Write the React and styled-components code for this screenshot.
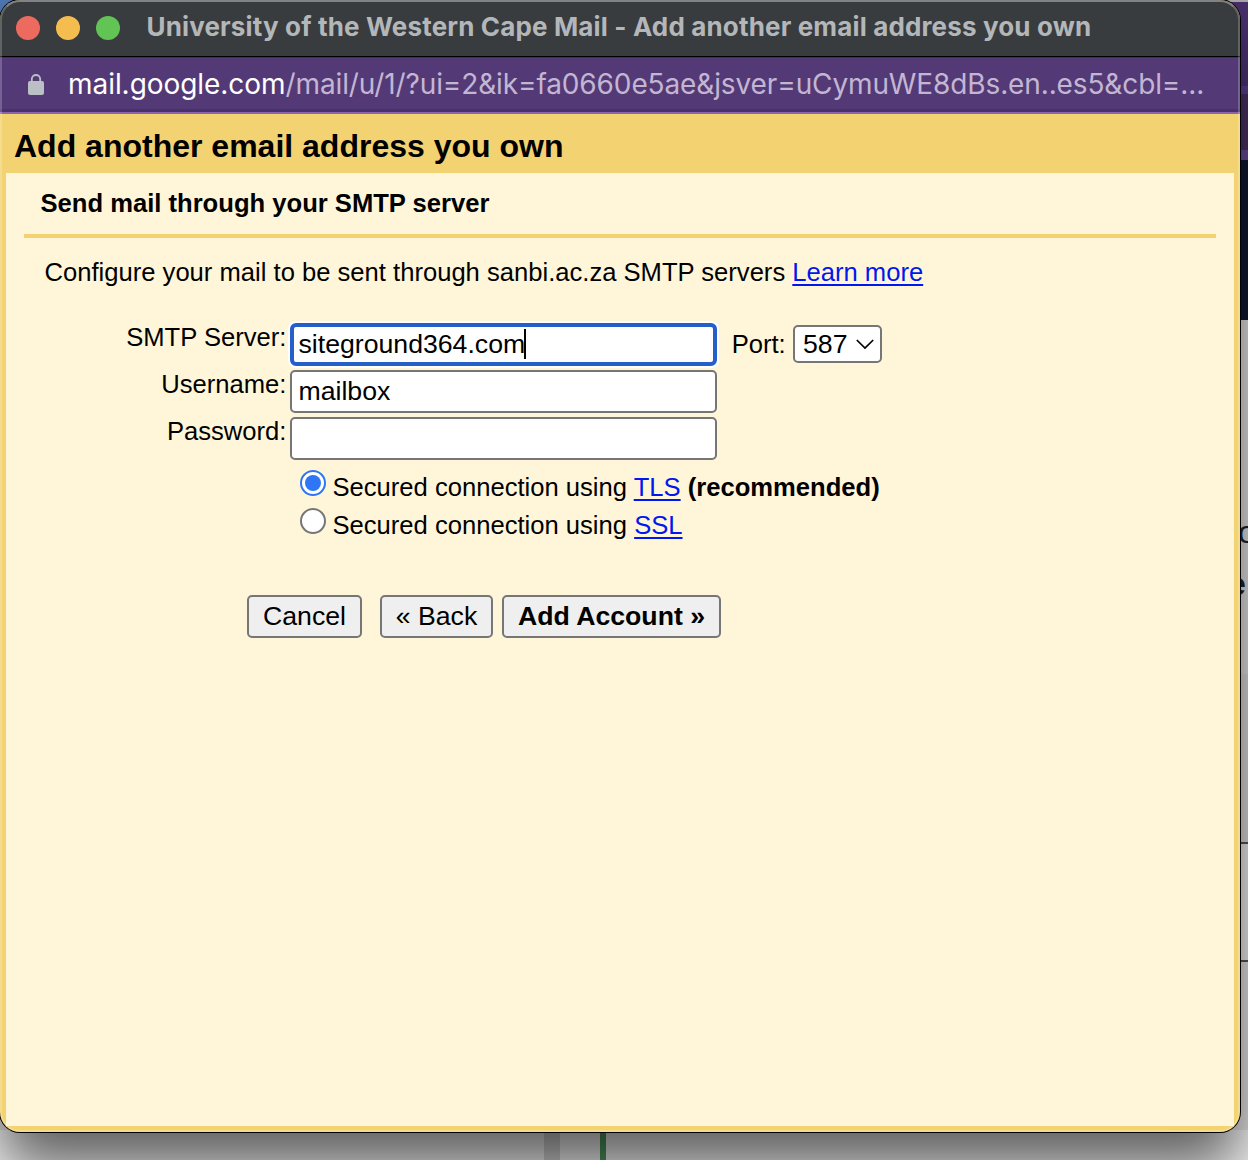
import React from "react";
import styled, { createGlobalStyle, css } from "styled-components";

const GlobalStyle = createGlobalStyle`
  * { box-sizing: border-box; }
  body {
    margin: 0;
    overflow: hidden;
    font-family: "Liberation Sans", Arial, sans-serif;
    color: #000;
  }
`;

const Desktop = styled.div`
  position: relative;
  width: 1248px;
  height: 1160px;
  overflow: hidden;
  background: #fff;
`;

const Backdrop = styled.div`
  position: absolute;
  inset: 0;
  display: flex;
  flex-direction: column;
  align-items: flex-end;
  background: linear-gradient(to bottom, #4f78b4 0, #4f78b4 60px, #e4e4e4 60px);
`;

const Strip = styled.div`
  flex: none;
  width: ${(p) => p.$w || 24}px;
  height: ${(p) => p.$h}px;
  background: ${(p) => p.$bg};
  padding: ${(p) => p.$pad || 0};
  font-size: 32px;
  line-height: 50px;
  color: #222;
`;

const Footer = styled.div`
  display: flex;
  width: 100%;
  flex: 1;
`;

const Block = styled.div`
  width: ${(p) => p.$w}px;
  background: ${(p) => p.$bg};
`;

const Window = styled.main`
  position: relative;
  display: flex;
  flex-direction: column;
  width: 1240px;
  height: 1132px;
  border-radius: 20px;
  overflow: hidden;
  background: #f3d272;
  box-shadow: 0 0 0 1px #000, 0 36px 60px rgba(0, 0, 0, 0.62);
  &::after {
    content: "";
    position: absolute;
    inset: 0;
    border: 2px solid rgba(255, 255, 255, 0.2);
    border-top-color: rgba(255, 255, 255, 0.36);
    border-radius: 20px;
    pointer-events: none;
  }
`;

const TitleBar = styled.header`
  display: flex;
  align-items: center;
  flex: none;
  height: 57px;
  padding: 0 0 1px 16px;
  background: #393c3e;
  border-bottom: 1px solid #000;
`;

const Light = styled.span`
  width: 24px;
  height: 24px;
  margin-right: 16px;
  border-radius: 50%;
  background: ${(p) => p.$color};
`;

const WindowTitle = styled.h1`
  margin: 0 0 2px 10.5px;
  font: 700 26px/32px Inter, sans-serif;
  letter-spacing: 0.15px;
  white-space: nowrap;
  color: #b4b7b9;
`;

const AddressBar = styled.div`
  display: flex;
  align-items: center;
  flex: none;
  height: 57px;
  padding: 0 0 0 28px;
  background: #533a77;
  border-bottom: 2px solid #8965b0;
  box-shadow: inset 0 1px #432f5b, inset 0 -3px #49326b;
`;

const Url = styled.div`
  margin: 0 0 1px 24px;
  font: 400 28px/34px Inter, sans-serif;
  letter-spacing: -0.12px;
  white-space: nowrap;
  color: #c3b6d3;
`;

const Host = styled.span`
  color: #fff;
  letter-spacing: -0.05px;
`;

const PageTitle = styled.h2`
  flex: none;
  height: 59px;
  margin: 0;
  padding: 14px 0 0 14px;
  font-size: 32px;
  line-height: 36px;
  white-space: nowrap;
`;

const Panel = styled.section`
  flex: 1;
  margin: 0 6px 6px;
  padding: 0 18px;
  background: #fff6da;
  font-size: 25.6px;
  line-height: 30px;
`;

const SectionTitle = styled.h3`
  height: 65px;
  margin: 0;
  padding: 15px 0 0 16.5px;
  font-size: 25.6px;
  line-height: 30px;
  border-bottom: 4px solid #f3d272;
`;

const Intro = styled.p`
  margin: 19px 0 0 20.5px;
  height: 65px;
`;

const Link = styled.a`
  color: #0018ee;
  text-decoration: underline;
  text-decoration-thickness: 2px;
  text-underline-offset: 3px;
`;

const FieldRow = styled.div`
  display: flex;
  height: 47px;
`;

const Label = styled.label`
  width: 262.4px;
  text-align: right;
  margin-right: 3.6px;
`;

const Field = styled.div`
  display: flex;
  align-items: center;
  width: 427px;
  height: 43px;
  margin-top: 1px;
  padding: 0 0 1px 6.5px;
  border: 2px solid #767676;
  border-radius: 5px;
  background: #fff;
  font-size: 26.67px;
  ${(p) =>
    p.$focused &&
    css`
      border: 4px solid #2560c8;
      padding-left: 4.5px;
      border-radius: 6px;
      box-shadow: 0 0 0 2px #fff;
    `}
`;

const Caret = styled.span`
  width: 2px;
  height: 30px;
  margin-left: -1.5px;
  background: #000;
`;

const PortLabel = styled.label`
  margin: 7px 7.3px 0 14.7px;
`;

const Select = styled.div`
  display: flex;
  align-items: center;
  justify-content: space-between;
  width: 89px;
  height: 38px;
  margin-top: 3px;
  padding: 0 6px 0 8px;
  border: 2px solid #767676;
  border-radius: 5px;
  background: #fff;
  font-size: 26.67px;
`;

const Options = styled.div`
  padding: 7px 0 0 276px;
`;

const Option = styled.label`
  display: flex;
  height: 38px;
`;

const OptionText = styled.span`
  margin: 2px 0 0 6.5px;
`;

const Radio = styled.span`
  display: flex;
  align-items: center;
  justify-content: center;
  width: 26px;
  height: 26px;
  border: 2px solid ${(p) => (p.$on ? "#2f76f5" : "#767676")};
  border-radius: 50%;
  background: #fff;
  &::after {
    content: "";
    width: 16px;
    height: 16px;
    border-radius: 50%;
    background: ${(p) => (p.$on ? "#2f76f5" : "transparent")};
  }
`;

const Actions = styled.div`
  display: flex;
  padding: 49px 0 0 223px;
`;

const Button = styled.button`
  width: ${(p) => p.$w}px;
  height: 43px;
  margin: 0 ${(p) => p.$gap || 0}px 0 0;
  padding: 0 0 1px;
  border: 2px solid #767676;
  border-radius: 5px;
  background: #efefef;
  color: #000;
  font: ${(p) => (p.$primary ? 700 : 400)} 26.67px/30px "Liberation Sans", Arial, sans-serif;
  white-space: nowrap;
`;

export default function App() {
  return (
    <Desktop>
      <GlobalStyle />
      <Backdrop>
        <Strip $w={80} $h={2} $bg="#aaa" />
        <Strip $w={80} $h={84} $bg="linear-gradient(#482f6c, #4d3377)" />
        <Strip $h={8} $bg="#5d4090" />
        <Strip $h={56} $bg="#4a3164" />
        <Strip $h={10} $bg="#6b4a9d" />
        <Strip $h={160} $bg="#0f1830" />
        <Strip $h={187} $bg="#e4e4e4" />
        <Strip $h={50} $bg="#e4e4e4" $pad="0 0 0 14px">o</Strip>
        <Strip $h={117} $bg="#e4e4e4" $pad="2px 0 0 4px"><b>e</b></Strip>
        <Strip $h={168} $bg="#dcdcdc" />
        <Strip $h={2} $bg="#555" />
        <Strip $h={116} $bg="#f0f0f0" />
        <Strip $h={2} $bg="#555" />
        <Strip $h={168} $bg="#e6e6e6" />
        <Footer>
          <Block $w={544} $bg="#f6f6f6" />
          <Block $w={16} $bg="#d3d3d3" />
          <Block $w={40} $bg="#f6f6f6" />
          <Block $w={6} $bg="#4f9a60" />
          <Block $w={642} $bg="#f6f6f6" />
        </Footer>
      </Backdrop>
      <Window>
        <TitleBar>
          <Light $color="#ed6a5f" />
          <Light $color="#f5bd4f" />
          <Light $color="#61c455" />
          <WindowTitle>University of the Western Cape Mail - Add another email address you own</WindowTitle>
        </TitleBar>
        <AddressBar>
          <svg width="16" height="22" viewBox="0 0 16 22">
            <rect y="7" width="16" height="14" rx="2" fill="#bbc0c4" />
            <path d="M3.8 8V5.2a4.2 4.2 0 0 1 8.4 0V8" fill="none" stroke="#bbc0c4" strokeWidth="1.8" />
          </svg>
          <Url>
            <Host>mail.google.com</Host>/mail/u/1/?ui=2&amp;ik=fa0660e5ae&amp;jsver=uCymuWE8dBs.en..es5&amp;cbl=...
          </Url>
        </AddressBar>
        <PageTitle>Add another email address you own</PageTitle>
        <Panel>
          <SectionTitle>Send mail through your SMTP server</SectionTitle>
          <Intro>
            Configure your mail to be sent through sanbi.ac.za SMTP servers <Link>Learn more</Link>
          </Intro>
          <FieldRow>
            <Label>SMTP Server:</Label>
            <Field $focused>
              siteground364.com
              <Caret />
            </Field>
            <PortLabel>Port:</PortLabel>
            <Select>
              587
              <svg width="18" height="12" viewBox="0 0 18 12">
                <path d="M0.8 2l8.2 8 8.2-8" fill="none" stroke="#000" strokeWidth="1.7" />
              </svg>
            </Select>
          </FieldRow>
          <FieldRow>
            <Label>Username:</Label>
            <Field>mailbox</Field>
          </FieldRow>
          <FieldRow>
            <Label>Password:</Label>
            <Field />
          </FieldRow>
          <Options>
            <Option>
              <Radio $on />
              <OptionText>
                Secured connection using <Link>TLS</Link> <b>(recommended)</b>
              </OptionText>
            </Option>
            <Option>
              <Radio />
              <OptionText>
                Secured connection using <Link>SSL</Link>
              </OptionText>
            </Option>
          </Options>
          <Actions>
            <Button $w={115} $gap={18}>Cancel</Button>
            <Button $w={113} $gap={9}>« Back</Button>
            <Button $w={219} $primary>Add Account »</Button>
          </Actions>
        </Panel>
      </Window>
    </Desktop>
  );
}
